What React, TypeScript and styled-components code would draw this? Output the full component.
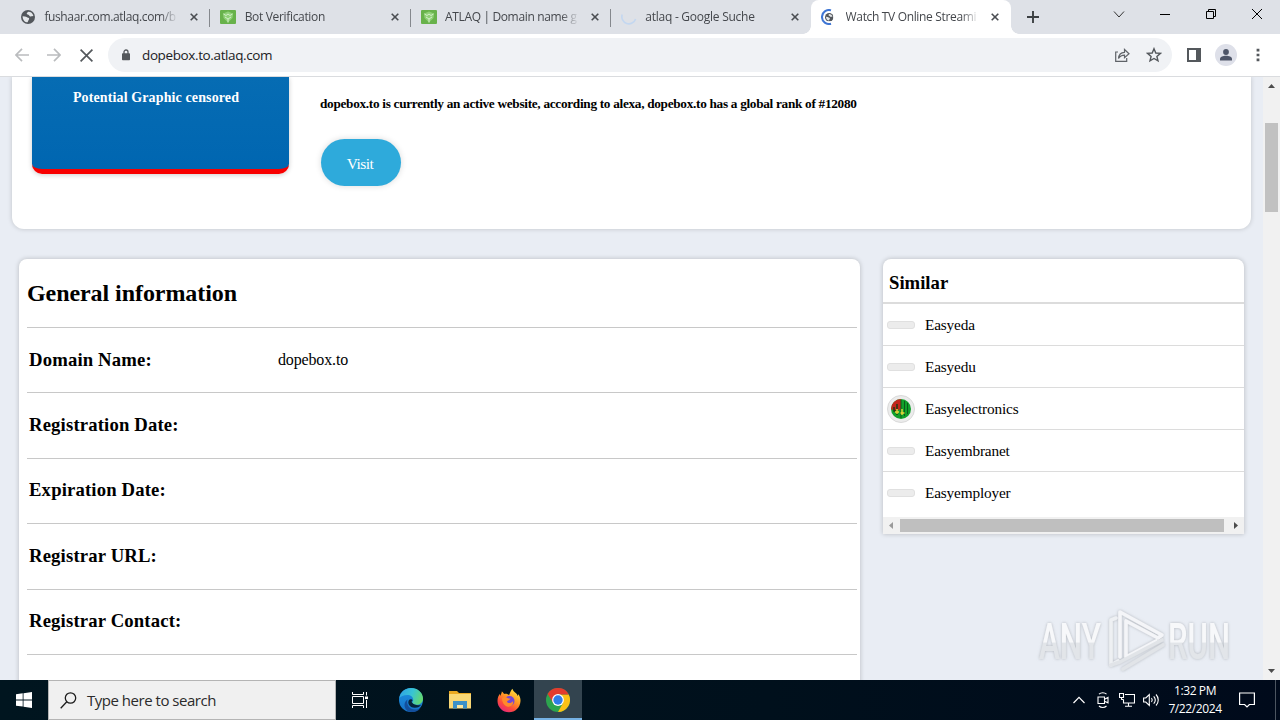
import React from 'react';
import styled, { createGlobalStyle, css } from 'styled-components';

const serif = "'Liberation Serif', 'Times New Roman', serif";
const sans = "'Open Sans', 'Noto Sans', sans-serif";

type TabIcon = 'globe' | 'atlaq' | 'spinner' | 'loading';

interface TabInfo {
  title: string;
  icon: TabIcon;
  active?: boolean;
  spacing: number;
}

const tabs: TabInfo[] = [
  { title: 'fushaar.com.atlaq.com/b', icon: 'globe', spacing: -0.38 },
  { title: 'Bot Verification', icon: 'atlaq', spacing: -0.33 },
  { title: 'ATLAQ | Domain name g', icon: 'atlaq', spacing: -0.35 },
  { title: 'atlaq - Google Suche', icon: 'spinner', spacing: -0.25 },
  { title: 'Watch TV Online Streami', icon: 'loading', active: true, spacing: -0.34 },
];

const infoRows = [
  { label: 'Domain Name:', value: 'dopebox.to' },
  { label: 'Registration Date:', value: '' },
  { label: 'Expiration Date:', value: '' },
  { label: 'Registrar URL:', value: '' },
  { label: 'Registrar Contact:', value: '' },
  { label: '', value: '' },
];

const similar = [
  { name: 'Easyeda' },
  { name: 'Easyedu' },
  { name: 'Easyelectronics', logo: true },
  { name: 'Easyembranet' },
  { name: 'Easyemployer' },
];

/* ---------- icons ---------- */

const GlobeIcon: React.FunctionComponent<{ size?: number }> = ({ size = 14 }) => (
  <svg width={size} height={size} viewBox="0 0 14 14">
    <circle cx="7" cy="7" r="7" fill="#53575c" />
    <path
      d="M1.600 6.200 4 6.400c1.400 0 1.800 1.200 3.200 1.300 1.200.1 1.200 1.400.4 2.200l-1 2.400C3.800 12.300 1.600 10 1.600 6.200ZM7.200 1.700c-.6.900-1.600.9-1.400 2 .2 1 1.600.7 2.200 1.500.6.9 1.500 1.500 2.700 1.100l1.700-.4A5.500 5.500 0 0 0 7.200 1.700Z"
      fill="#e4e7ea"
    />
  </svg>
);

const TabFavicon: React.FunctionComponent<{ icon: TabIcon }> = ({ icon }) => {
  if (icon === 'globe') {
    return <GlobeIcon />;
  }
  if (icon === 'atlaq') {
    return (
      <svg width="16" height="14" viewBox="0 0 16 14">
        <rect width="16" height="14" rx="1" fill="#68b24b" />
        <path d="M3 3.500 8 1.500l5 2L12.500 8 8 12.500 3.500 8Z" fill="#8fd077" />
        <path
          d="M3.500 4 6 5.500 8 4l2 1.500L12.500 4M5 7l3 2 3-2M8 9v3.500"
          fill="none"
          stroke="#d3f0c8"
          strokeWidth="1"
        />
      </svg>
    );
  }
  if (icon === 'spinner') {
    return (
      <svg width="16" height="16" viewBox="0 0 16 16">
        <path d="M1.200 5.500A7 7 0 1 0 14.600 10" fill="none" stroke="#c3d7f0" strokeWidth="1.600" />
      </svg>
    );
  }
  return (
    <svg width="16" height="16" viewBox="0 0 16 16">
      <path d="M10 1.300A7 7 0 1 0 10 14.700" fill="none" stroke="#3f76d4" strokeWidth="2" />
      <svg x="4" y="4" width="8.500" height="8.500">
        <GlobeIcon size={8.5} />
      </svg>
    </svg>
  );
};

const CloseGlyph = () => (
  <svg width="8" height="8" viewBox="0 0 8 8">
    <path d="M.7.7l6.600 6.600M7.300.7.7 7.300" stroke="#4a4d52" strokeWidth="1.600" />
  </svg>
);

const EdgeIcon = () => (
  <svg width="26" height="26" viewBox="0 0 26 26">
    <defs>
      <linearGradient id="edgeTop" x1="0" y1="0.300" x2="1" y2="0.600">
        <stop offset="0" stopColor="#2fa4e4" />
        <stop offset="0.500" stopColor="#38c4d4" />
        <stop offset="1" stopColor="#66d96a" />
      </linearGradient>
      <linearGradient id="edgeBottom" x1="0" y1="0" x2="0" y2="1">
        <stop offset="0" stopColor="#1c92e0" />
        <stop offset="1" stopColor="#1672c8" />
      </linearGradient>
    </defs>
    <circle cx="13" cy="13" r="12" fill="url(#edgeBottom)" />
    <path
      d="M1.200 11C2.500 4.500 7.500 1 13 1c7 0 12 5 12 10.500 0 4-3 6.300-6.500 6.300-3 0-4.300-1.100-4.300-2 0-.8 1-1.100 1-3C15.200 10 12.500 8 9.500 8 5.500 8 2.500 9.500 1.200 11Z"
      fill="url(#edgeTop)"
    />
    <path
      d="M9.500 12.500c-1.500 5 2 10 7.500 10 2.300 0 4.300-.6 5.600-1.600C20.500 24 17 25 13.500 25 9 25 6.500 21.500 6.500 18c0-2.500 1.300-4.500 3-5.500Z"
      fill="#134f9c"
    />
    <path d="M14.200 15.800c-1-1-.5-1.800.5-2.200-.5-1.500-2.700-1.600-3.700-.6-2 3 .5 8 6 7.800 3 0 5-1.500 6-3.100-3 1.300-7.300.2-8.800-1.900Z" fill="#06243c" />
  </svg>
);

const FolderIcon = () => (
  <svg width="22" height="20" viewBox="0 0 22 20">
    <path d="M0 1h8l2 2h12v4H0Z" fill="#e9a821" />
    <rect y="4" width="22" height="14.500" fill="#f8d775" />
    <path d="M4 18.500V11h14v7.500h-4V15H8v3.500Z" fill="#3b91c8" />
    <path d="M8 15h6v3H8Z" fill="#fbe7a0" />
  </svg>
);

const FirefoxIcon = () => (
  <svg width="24" height="25" viewBox="0 0 24 25">
    <defs>
      <linearGradient id="fox" x1="0.800" y1="0" x2="0.200" y2="1">
        <stop offset="0" stopColor="#ffe744" />
        <stop offset="0.400" stopColor="#ff9a24" />
        <stop offset="0.700" stopColor="#fd4b3b" />
        <stop offset="1" stopColor="#e32283" />
      </linearGradient>
    </defs>
    <path
      d="M15.500.8c.2 2 2 3 3.500 4.400.9.800 1.500 1.700 1.700 2.700.5-.6.500-1.400.4-2C23 8 23.600 10.500 23.500 13 23.300 19.500 18.200 24.300 12 24.300S.5 19.300.5 13c0-3 1-5.500 2.500-7.200V8C3.800 6.700 4.800 5 4.800 3.500 6 4.200 6.700 5 7 6c2.300-.6 4 .1 5 1.200 1-2.200 1.800-5 3.500-6.400Z"
      fill="url(#fox)"
    />
    <circle cx="12.500" cy="13" r="5" fill="#7246d8" />
    <path d="M5 10c2-1.500 4-1 5.500 0 1.200.6 2.500.3 3 .8-.6 1.500-3.300 1.500-3.500 2.700.6 2.200 4.500 2 6-.5 1 4.500-3 6.500-6 5.500C7 17.500 5 14 5 10Z" fill="#ff8a2b" />
  </svg>
);

const ChromeIcon = () => (
  <svg width="24" height="24" viewBox="0 0 24 24">
    <circle cx="12" cy="12" r="12" fill="#2da44e" />
    <path d="M12 6.500h10.700A12 12 0 0 1 12 24l5-9Z" fill="#fbc116" />
    <path d="M1.600 6A12 12 0 0 1 22.700 6.500H12L7.200 15Z" fill="#e33b2e" />
    <circle cx="12" cy="12" r="5.900" fill="#fff" />
    <circle cx="12" cy="12" r="4.700" fill="#2f7de8" />
  </svg>
);

const Watermark = () => (
  <svg width="200" height="70" viewBox="0 0 200 70">
    <defs>
      <filter id="soft" x="-10%" y="-10%" width="120%" height="120%">
        <feDropShadow dx="0" dy="0" stdDeviation="1.800" floodColor="#8b9096" floodOpacity="0.600" />
      </filter>
      <linearGradient id="sheen" x1="0" y1="0" x2="0" y2="1">
        <stop offset="0.500" stopColor="#f7f8fa" />
        <stop offset="0.520" stopColor="#e2e5e9" />
      </linearGradient>
    </defs>
    <g filter="url(#soft)" fontFamily="Roboto, sans-serif" fontSize="50" fontWeight="500" fill="url(#sheen)">
      <text x="3" y="52" textLength="62" lengthAdjust="spacingAndGlyphs">
        ANY
      </text>
      <text x="132" y="52" textLength="62" lengthAdjust="spacingAndGlyphs">
        RUN
      </text>
      <g fill="none" strokeLinecap="round" strokeLinejoin="round" strokeWidth="3.600">
        <path d="M80 11 75 13V58L82 54" stroke="#eef0f3" />
        <path d="M84 50V5L126 28 122 31 90 14V50L120 34" stroke="#f4f5f8" />
        <path d="M75 58 84 55 126 33M87 62 127 38" stroke="#e1e4e8" />
      </g>
    </g>
  </svg>
);

/* ---------- page ---------- */

const App: React.FunctionComponent = () => (
  <>
    <GlobalStyle />
    <Screen>
      <TabStrip>
        {tabs.map(tab => (
          <Tab key={tab.title} $active={tab.active}>
            <FaviconSlot>
              <TabFavicon icon={tab.icon} />
            </FaviconSlot>
            <TabTitle $spacing={tab.spacing}>{tab.title}</TabTitle>
            <CloseGlyph />
          </Tab>
        ))}
        <NewTab>
          <svg width="12" height="12" viewBox="0 0 12 12">
            <path d="M6 0v12M0 6h12" stroke="#3c4043" strokeWidth="1.900" />
          </svg>
        </NewTab>
        <WindowButtons>
          <WindowButton>
            <svg width="12" height="10" viewBox="0 0 12 10">
              <path d="m1 2.500 5 5.500 5-5.500" fill="none" stroke="#333" />
            </svg>
          </WindowButton>
          <WindowButton>
            <svg width="10" height="12" viewBox="0 0 10 12">
              <path d="M0 6.500h10" stroke="#000" />
            </svg>
          </WindowButton>
          <WindowButton>
            <svg width="10" height="10" viewBox="0 0 10 10">
              <path d="M.5 2.500h7v7h-7ZM2.500 2.500v-2h7v7h-2" fill="none" stroke="#000" />
            </svg>
          </WindowButton>
          <WindowButton>
            <svg width="10" height="10" viewBox="0 0 10 10">
              <path d="m0 0 10 10M10 0 0 10" stroke="#000" />
            </svg>
          </WindowButton>
        </WindowButtons>
      </TabStrip>

      <Toolbar>
        <NavButton>
          <svg width="14" height="14" viewBox="0 0 14 14">
            <path d="M7 .8.900 7 7 13.200M1 7h13" fill="none" stroke="#babcbe" strokeWidth="1.700" />
          </svg>
        </NavButton>
        <NavButton>
          <svg width="14" height="14" viewBox="0 0 14 14">
            <path d="M7 .8 13.100 7 7 13.200M13 7H0" fill="none" stroke="#babcbe" strokeWidth="1.700" />
          </svg>
        </NavButton>
        <NavButton>
          <svg width="13" height="13" viewBox="0 0 13 13">
            <path d="m.6.6 11.800 11.800M12.400.6.6 12.400" stroke="#54585c" strokeWidth="1.700" />
          </svg>
        </NavButton>
        <AddressBar>
          <svg width="8" height="12" viewBox="0 0 8 12">
            <path d="M2 5V3a2 2 0 0 1 4 0v2" fill="none" stroke="#54585c" strokeWidth="1.300" />
            <rect y="4.300" width="8" height="6.900" rx=".8" fill="#54585c" />
          </svg>
          <Url>dopebox.to.atlaq.com</Url>
          <svg width="16" height="16" viewBox="0 0 16 16">
            <path
              d="M4 5H1.700v9.300h11V11M4.500 11.500c.3-4 2.300-6 6-6.200V2.500L15 6.700l-4.500 4V8.200c-2.700 0-4.600 1-6 3.300Z"
              fill="none"
              stroke="#5f6368"
              strokeWidth="1.200"
            />
          </svg>
          <svg width="16" height="16" viewBox="0 0 16 16">
            <path
              d="m8 1.700 1.800 4.300 4.600.4-3.500 3 1.100 4.500L8 11.500l-4 2.400 1.100-4.500-3.500-3 4.600-.4Z"
              fill="none"
              stroke="#54585c"
              strokeWidth="1.400"
            />
          </svg>
        </AddressBar>
        <ToolbarActions>
          <svg width="14" height="14" viewBox="0 0 14 14">
            <path d="M1 1h12v12H1Z" fill="none" stroke="#54585c" strokeWidth="2" />
            <path d="M9 1h4v12H9Z" fill="#54585c" />
          </svg>
          <Avatar>
            <svg width="12" height="12" viewBox="0 0 12 12">
              <circle cx="6" cy="3" r="2.900" fill="#4e5568" />
              <path d="M0 11.500V10c0-2 3-3.200 6-3.200s6 1.200 6 3.200v1.500Z" fill="#4e5568" />
            </svg>
          </Avatar>
          <svg width="4" height="14" viewBox="0 0 4 14">
            <path d="M.6.800h2.800v2.600H.6ZM.6 5.700h2.800v2.600H.6ZM.6 10.600h2.800v2.600H.6Z" fill="#54585c" />
          </svg>
        </ToolbarActions>
      </Toolbar>

      <Viewport>
        <Page>
          <Hero>
            <Preview>Potential Graphic censored</Preview>
            <HeroText>
              <Summary>
                dopebox.to is currently an active website, according to alexa, dopebox.to has a global rank of #12080
              </Summary>
              <VisitButton>Visit</VisitButton>
            </HeroText>
          </Hero>
          <Columns>
            <InfoCard>
              <InfoTitle>General information</InfoTitle>
              {infoRows.map(row => (
                <InfoRow key={row.label}>
                  <InfoLabel>{row.label}</InfoLabel>
                  <InfoValue>{row.value}</InfoValue>
                </InfoRow>
              ))}
            </InfoCard>
            <SimilarCard>
              <SimilarTitle>Similar</SimilarTitle>
              {similar.map(item => (
                <SimilarRow key={item.name}>
                  {item.logo ? (
                    <SiteLogo>
                      <svg width="20" height="20" viewBox="0 0 20 20">
                        <circle cx="10" cy="10" r="10" fill="#11a02b" />
                        <path d="M10 0A10 10 0 0 0 0 10l4 2 6-2Z" fill="#c3261b" />
                        <path d="M10 1v18M13.500 2v15M16.500 4v11" stroke="#0b5c1b" />
                        <path d="M3 8v4h3v4M6 5v5" fill="none" stroke="#143d10" strokeWidth="1.400" />
                        <path d="M6 10v5M11 10v6M4 13h4M9.500 14h4" stroke="#e9d83a" strokeWidth="1.400" />
                      </svg>
                    </SiteLogo>
                  ) : (
                    <EmptyLogo />
                  )}
                  <SimilarName>{item.name}</SimilarName>
                </SimilarRow>
              ))}
              <HorizontalScroll>
                <Arrow $dir="left" $color="#9a9a9a" />
                <HorizontalThumb />
                <Arrow $dir="right" $color="#4d4d4d" />
              </HorizontalScroll>
            </SimilarCard>
          </Columns>
        </Page>
        <VerticalScroll>
          <Arrow $dir="up" $color="#4d4d4d" />
          <VerticalThumb />
          <Arrow $dir="down" $color="#4d4d4d" />
        </VerticalScroll>
        <WatermarkLayer>
          <Watermark />
        </WatermarkLayer>
      </Viewport>

      <Taskbar>
        <TaskButton>
          <svg width="16" height="16" viewBox="0 0 16 16">
            <path d="M0 2.200 6.700 1.300v6.200H0ZM7.500 1.200 16 0v7.500H7.500ZM0 8.400h6.700v6.200L0 13.700ZM7.500 8.400H16V16l-8.500-1.200Z" fill="#fff" />
          </svg>
        </TaskButton>
        <SearchBox>
          <svg width="17" height="17" viewBox="0 0 17 17">
            <circle cx="10.500" cy="6" r="5.200" fill="none" stroke="#1c1c1c" strokeWidth="1.300" />
            <path d="M6.800 9.800.7 16.200" stroke="#1c1c1c" strokeWidth="1.300" />
          </svg>
          <SearchText>Type here to search</SearchText>
        </SearchBox>
        <TaskButton>
          <svg width="17" height="16" viewBox="0 0 17 16">
            <path
              d="M.5 0v2.500h11V0M.5 16v-2.500h11V16M.5 4.500h11v7H.5ZM14.500 0v3.500M14.500 8v8"
              fill="none"
              stroke="#fff"
              strokeWidth="1"
            />
            <path d="M13 4.500h3v2.600h-3Z" fill="#fff" />
          </svg>
        </TaskButton>
        <TaskApps>
          <TaskApp>
            <EdgeIcon />
          </TaskApp>
          <TaskApp>
            <FolderIcon />
          </TaskApp>
          <TaskApp>
            <FirefoxIcon />
          </TaskApp>
          <TaskApp $active>
            <ChromeIcon />
          </TaskApp>
        </TaskApps>
        <Tray>
          <TrayIcon>
            <svg width="12" height="8" viewBox="0 0 12 8">
              <path d="m.5 7 5.500-5.600L11.500 7" fill="none" stroke="#fff" strokeWidth="1.200" />
            </svg>
          </TrayIcon>
          <TrayIcon>
            <svg width="12" height="16" viewBox="0 0 12 16">
              <path d="M1 5h6.500v6.500H1ZM7.500 7.300 11 5.500v5.300L7.500 9.200M2 2.200C4 .300 7.500.300 9.500 2.200M2 14c2 1.900 5.500 1.900 7.500 0" fill="none" stroke="#fff" strokeWidth="1.100" />
            </svg>
          </TrayIcon>
          <TrayIcon>
            <svg width="16" height="14" viewBox="0 0 16 14">
              <path d="M6 1.500h9.500v8.500H4.500V6.500M.5.500h4v4h-4ZM2.500 4.500v2.300M2.500 6.500h2M9.500 10v3M6 13.300h7" fill="none" stroke="#fff" strokeWidth="1.100" />
            </svg>
          </TrayIcon>
          <TrayIcon>
            <svg width="17" height="14" viewBox="0 0 17 14">
              <path
                d="M.6 5h2.200l3.500-3.500v11L2.800 9H.6ZM8.500 5c.9 1.200.9 2.800 0 4M10.700 3.300c1.900 2.200 1.900 5.200 0 7.400M13 1.500c3 3.200 3 7.800 0 11"
                fill="none"
                stroke="#fff"
                strokeWidth="1.100"
              />
            </svg>
          </TrayIcon>
          <Clock>
            <span>1:32 PM</span>
            <span>7/22/2024</span>
          </Clock>
          <TrayNote>
            <svg width="16" height="16" viewBox="0 0 16 16">
              <path d="M.6 1h14.800v11.500h-5L8 15l-2.400-2.500h-5Z" fill="none" stroke="#fff" strokeWidth="1.200" />
            </svg>
          </TrayNote>
        </Tray>
      </Taskbar>
    </Screen>
  </>
);

export default App;

const GlobalStyle = createGlobalStyle`
  * {
    box-sizing: border-box;
  }
  body {
    margin: 0;
    overflow: hidden;
  }
  svg {
    display: block;
    flex-shrink: 0;
  }
`;

const Screen = styled.div`
  display: flex;
  flex-direction: column;
  width: 1280px;
  height: 720px;
  overflow: hidden;
  background-color: #fff;
  font-family: ${sans};
`;

const TabStrip = styled.div`
  display: flex;
  height: 34px;
  padding-left: 10px;
  background-color: #dee1e7;
`;

const Tab = styled.div<{ $active?: boolean }>`
  display: flex;
  align-items: center;
  flex-shrink: 0;
  width: 200.3px;
  height: 34px;
  padding: 0 12px 0 10px;
  background: linear-gradient(#85888d, #85888d) right 9px / 1px 18px no-repeat;
  ${p =>
    p.$active &&
    css`
      position: relative;
      background: #fff;
      border-radius: 8px 8px 0 0;
      /* flared feet of the selected tab */
      &::before,
      &::after {
        content: '';
        position: absolute;
        bottom: 0;
        width: 8px;
        height: 8px;
      }
      &::before {
        right: 100%;
        background: radial-gradient(circle at 0 0, transparent 7.5px, #fff 8px);
      }
      &::after {
        left: 100%;
        background: radial-gradient(circle at 100% 0, transparent 7.5px, #fff 8px);
      }
    `}
  &:nth-child(4) {
    background: none;
  }
`;

const FaviconSlot = styled.div`
  display: flex;
  justify-content: center;
  align-items: center;
  width: 16px;
  height: 16px;
  margin-right: 8.4px;
`;

const TabTitle = styled.div<{ $spacing: number }>`
  flex: 1;
  height: 18px;
  margin-right: 12px;
  color: #44474c;
  font-size: 12px;
  line-height: 17px;
  letter-spacing: ${p => p.$spacing}px;
  white-space: nowrap;
  mask-image: linear-gradient(to right, #000 calc(100% - 18px), transparent);
`;

const NewTab = styled.div`
  display: flex;
  align-items: center;
  margin-left: 16px;
`;

const WindowButtons = styled.div`
  display: flex;
  margin-left: auto;
`;

const WindowButton = styled.div`
  display: flex;
  justify-content: center;
  align-items: center;
  width: 46px;
  height: 28px;
`;

const Toolbar = styled.div`
  display: flex;
  align-items: center;
  height: 43px;
  padding: 0 20px 0 6px;
  border-bottom: 1px solid #dadcdf;
`;

const NavButton = styled.div`
  display: flex;
  justify-content: center;
  flex-shrink: 0;
  width: 32px;
`;

const AddressBar = styled.div`
  display: flex;
  align-items: center;
  flex-shrink: 0;
  gap: 16px;
  width: 1064px;
  height: 34px;
  margin-left: 6px;
  padding: 0 10px 0 14px;
  background-color: #f0f2f5;
  border-radius: 17px;
`;

const Url = styled.div`
  flex: 1;
  margin-left: -4px;
  color: #202124;
  font-size: 13.5px;
  letter-spacing: -0.38px;
`;

const ToolbarActions = styled.div`
  display: flex;
  align-items: center;
  padding-left: 15px;
`;

const Avatar = styled.div`
  display: flex;
  justify-content: center;
  align-items: center;
  width: 22px;
  height: 22px;
  margin: 0 19px 0 14px;
  background-color: #dee0e9;
  border-radius: 50%;
`;

const Viewport = styled.div`
  display: flex;
  position: relative;
  height: 603px;
  overflow: hidden;
  font-family: ${serif};
`;

const Page = styled.div`
  flex: 1;
  background-color: #e9edf4;
`;

const Hero = styled.div`
  display: flex;
  width: 1239px;
  height: 152px;
  margin-left: 12px;
  padding-left: 20px;
  background-color: #fff;
  border-radius: 0 0 12px 12px;
  box-shadow: 0 0 5px rgba(0, 0, 0, 0.18);
`;

const Preview = styled.div`
  width: 257px;
  height: 97px;
  padding: 12px 9px 0 0;
  color: #fff;
  font-size: 14px;
  font-weight: 700;
  line-height: 18px;
  letter-spacing: 0.12px;
  text-align: center;
  background: linear-gradient(#066cb3, #0066b1);
  border-bottom: 5px solid #f80000;
  border-radius: 0 0 10px 10px;
  box-shadow: 0 1px 5px rgba(0, 0, 0, 0.2);
`;

const HeroText = styled.div`
  display: flex;
  flex-direction: column;
  align-items: flex-start;
  margin-left: 31px;
`;

const Summary = styled.div`
  height: 16px;
  margin-top: 19px;
  color: #000;
  font-size: 13.28px;
  font-weight: 700;
  line-height: 16px;
  letter-spacing: -0.3px;
  white-space: nowrap;
`;

const VisitButton = styled.div`
  display: flex;
  justify-content: center;
  width: 80px;
  height: 47px;
  margin: 27px 0 0 1px;
  padding: 1px 2px 0 0;
  color: #fff;
  font-size: 15.5px;
  line-height: 47px;
  letter-spacing: -0.55px;
  background-color: #2eaadb;
  border-radius: 24px;
  box-shadow: 0 0 6px rgba(0, 0, 0, 0.15);
`;

const Columns = styled.div`
  display: flex;
  align-items: flex-start;
  gap: 23px;
  padding: 30px 0 0 19px;
`;

const InfoCard = styled.div`
  width: 841px;
  height: 440px;
  padding: 0 3px 0 8px;
  background-color: #fff;
  border-radius: 8px;
  box-shadow: 0 0 5px rgba(0, 0, 0, 0.22);
`;

const InfoTitle = styled.div`
  height: 68px;
  padding-top: 20px;
  font-size: 24px;
  font-weight: 700;
  line-height: 28px;
  letter-spacing: -0.07px;
`;

const InfoRow = styled.div`
  display: flex;
  align-items: center;
  height: 65.4px;
  padding: 0 0 1px 2px;
  border-top: 1px solid #c8c8c8;
`;

const InfoLabel = styled.div`
  width: 249px;
  font-size: 18.72px;
  font-weight: 700;
  letter-spacing: 0.15px;
`;

const InfoValue = styled.div`
  font-size: 16px;
  letter-spacing: -0.15px;
`;

const SimilarCard = styled.div`
  width: 361px;
  height: 275px;
  background-color: #fff;
  border-radius: 8px 8px 0 0;
  box-shadow: 0 0 5px rgba(0, 0, 0, 0.22);
`;

const SimilarTitle = styled.div`
  height: 45px;
  padding: 13px 0 0 6px;
  font-size: 18.72px;
  font-weight: 700;
  line-height: 22px;
  border-bottom: 2px solid #dcdcdc;
`;

const SimilarRow = styled.div`
  display: flex;
  align-items: center;
  height: 42px;
  padding-left: 4px;
  border-bottom: 1px solid #dcdcdc;
  &:nth-child(6) {
    border-color: transparent;
  }
`;

const EmptyLogo = styled.div`
  width: 28px;
  height: 8px;
  background-color: #ececec;
  border: 1px solid #e0e0e0;
  border-radius: 3px;
`;

const SiteLogo = styled.div`
  display: flex;
  justify-content: center;
  align-items: center;
  width: 28px;
  height: 28px;
  background-color: #ececec;
  border: 1px solid #dadada;
  border-radius: 50%;
`;

const SimilarName = styled.div`
  margin-left: 10px;
  font-size: 15.3px;
  line-height: 18px;
  letter-spacing: -0.17px;
`;

const HorizontalScroll = styled.div`
  display: flex;
  justify-content: space-between;
  align-items: center;
  height: 17px;
  margin-top: 3px;
  padding: 0 6px;
  background-color: #f1f1f1;
`;

const HorizontalThumb = styled.div`
  width: 324px;
  height: 13px;
  margin-right: 3px;
  background-color: #bfbfbf;
`;

const Arrow = styled.div<{ $dir: 'left' | 'right' | 'up' | 'down'; $color: string }>`
  width: ${p => (p.$dir === 'left' || p.$dir === 'right' ? 4 : 7)}px;
  height: ${p => (p.$dir === 'left' || p.$dir === 'right' ? 7 : 4)}px;
  background-color: ${p => p.$color};
  clip-path: ${p =>
    ({
      left: 'polygon(100% 0, 0 50%, 100% 100%)',
      right: 'polygon(0 0, 100% 50%, 0 100%)',
      up: 'polygon(0 100%, 50% 0, 100% 100%)',
      down: 'polygon(0 0, 50% 100%, 100% 0)',
    })[p.$dir]};
`;

const VerticalScroll = styled.div`
  display: flex;
  flex-direction: column;
  align-items: center;
  width: 17px;
  padding: 7px 0;
  background-color: #f1f1f1;
`;

const VerticalThumb = styled.div`
  width: 13px;
  height: 89px;
  margin: 35px 0 auto;
  background-color: #c1c1c1;
`;

const WatermarkLayer = styled.div`
  position: absolute;
  right: 44px;
  bottom: 3px;
`;

const Taskbar = styled.div`
  display: flex;
  height: 40px;
  color: #fff;
  background: linear-gradient(to right, #00151f, #00101c 60%, #000a1b);
`;

const TaskButton = styled.div`
  display: flex;
  justify-content: center;
  align-items: center;
  width: 48px;
  height: 40px;
`;

const SearchBox = styled.div`
  display: flex;
  align-items: center;
  gap: 10px;
  width: 288px;
  padding-left: 11px;
  color: #2b2b2b;
  background-color: #f0f0f0;
  border: 1px solid #b4b4b4;
`;

const SearchText = styled.div`
  font-size: 15px;
  letter-spacing: -0.48px;
`;

const TaskApps = styled.div`
  display: flex;
  gap: 1px;
  padding-left: 3px;
`;

const TaskApp = styled.div<{ $active?: boolean }>`
  display: flex;
  justify-content: center;
  align-items: center;
  width: 48px;
  height: 40px;
  ${p =>
    p.$active &&
    css`
      padding-top: 2px;
      background-color: #33444f;
      border-bottom: 2px solid #76b2e4;
    `}
`;

const Tray = styled.div`
  display: flex;
  align-items: center;
  margin-left: auto;
  padding-right: 4px;
`;

const TrayIcon = styled.div`
  display: flex;
  justify-content: center;
  width: 24px;
`;

const Clock = styled.div`
  display: flex;
  flex-direction: column;
  align-items: center;
  width: 64px;
  font-size: 12px;
  line-height: 18px;
  letter-spacing: -0.4px;
`;

const TrayNote = styled.div`
  display: flex;
  align-items: center;
  width: 49px;
  height: 40px;
  padding-left: 12px;
  border-right: 1px solid #4c5560;
`;
